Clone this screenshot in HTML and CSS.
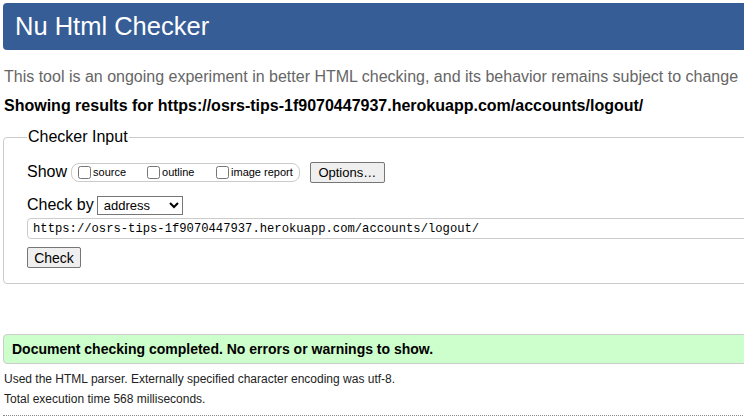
FILE: index.html
```html
<!DOCTYPE html>
<html>
<head>
<meta charset="utf-8">
<title>Nu Html Checker</title>
<link rel="stylesheet" href="styles.css">
</head>
<body>
<div class="page">
  <h1 class="title">Nu Html Checker</h1>
  <p class="intro">This tool is an ongoing experiment in better HTML checking, and its behavior remains subject to change</p>
  <p class="results">Showing results for https://osrs-tips-1f9070447937.herokuapp.com/accounts/logout/</p>
  <fieldset class="checker">
    <legend class="legend">Checker Input</legend>
    <div class="row show-row">
      <span class="label">Show</span>
      <fieldset class="opts">
        <label class="opt"><input type="checkbox" class="cb">source</label>
        <label class="opt"><input type="checkbox" class="cb">outline</label>
        <label class="opt"><input type="checkbox" class="cb">image report</label>
      </fieldset>
      <button class="btn options">Options…</button>
    </div>
    <div class="row by-row">
      <span class="label">Check by</span>
      <select class="sel"><option>address</option></select>
    </div>
    <input class="url" type="text" value="https://osrs-tips-1f9070447937.herokuapp.com/accounts/logout/">
    <div class="row">
      <button class="btn check">Check</button>
    </div>
  </fieldset>
  <p class="success">Document checking completed. No errors or warnings to show.</p>
  <p class="info">Used the HTML parser. Externally specified character encoding was utf-8.</p>
  <p class="info">Total execution time 568 milliseconds.</p>
  <hr class="sep">
</div>
</body>
</html>
```
FILE: styles.css
```css
html, body {
  margin: 0;
  padding: 0;
  overflow: hidden;
  background: #fff;
}
body {
  font-family: "Liberation Sans", Arial, sans-serif;
  color: #000;
}
.page {
  width: 780px;
  padding: 3px 0 0 3px;
}
.title {
  margin: 0;
  height: 47px;
  box-sizing: border-box;
  background: #365d95;
  color: #fff;
  font-weight: normal;
  font-size: 25.5px;
  line-height: 47px;
  padding-left: 12px;
  border-radius: 4px;
}
.intro {
  margin: 17px 0 0 1px;
  font-size: 16px;
  line-height: 20px;
  color: #666;
}
.results {
  margin: 9px 0 0 1px;
  font-size: 16px;
  line-height: 20px;
  font-weight: bold;
}
.checker {
  margin: 12px 0 0 0;
  border: 1px solid #ccc;
  border-radius: 4px;
  padding: 15px 0 15px 23px;
}
.legend {
  font-size: 16px;
  padding: 0 1px;
  margin-left: 0;
}
.row {
  display: flex;
  align-items: center;
}
.label {
  font-size: 16px;
}
.show-row {
  height: 22px;
}
.opts {
  display: flex;
  align-items: center;
  margin: 0 0 0 4px;
  padding: 0 6px 0 6px;
  height: 19px;
  box-sizing: border-box;
  border: 1px solid #ccc;
  border-radius: 8px;
  gap: 0;
}
.opt {
  display: flex;
  align-items: center;
  font-size: 11px;
}
.opt:nth-child(1) { width: 69px; }
.opt:nth-child(2) { width: 69px; }
.cb {
  margin: 0 2px 0 0;
  width: 13px;
  height: 13px;
}
.btn {
  font-family: "Liberation Sans", Arial, sans-serif;
  font-size: 13px;
  background: #efefef;
  border: 1px solid #767676;
  border-radius: 2px;
  padding: 0 6px;
  height: 21px;
  color: #000;
}
.options {
  margin-left: 10px;
  width: 75px;
}
.by-row {
  margin-top: 12px;
  height: 20px;
}
.sel {
  margin-left: 3px;
  width: 86px;
  height: 19px;
  font-family: "Liberation Sans", Arial, sans-serif;
  font-size: 13px;
  border: 1px solid #767676;
  border-radius: 0;
  padding: 0 2px;
  background: #fff;
}
.url {
  display: block;
  margin-top: 3px;
  width: 760px;
  height: 21px;
  box-sizing: border-box;
  border: 1px solid #ccc;
  border-radius: 4px;
  padding: 0 5px;
  font-family: "Liberation Mono", "Courier New", monospace;
  font-size: 12.2px;
  color: #000;
}
.check {
  margin-top: 8px;
  width: 54px;
  padding: 0;
  font-size: 14px;
}
.success {
  margin: 50px 0 0 0;
  height: 30px;
  box-sizing: border-box;
  background: #ccffcc;
  border: 1px solid #ccc;
  border-radius: 4px;
  padding-left: 8px;
  font-weight: bold;
  font-size: 14px;
  line-height: 28px;
}
.info {
  margin: 0 0 0 1px;
  font-size: 12px;
  line-height: 20px;
  color: #222;
}
.success + .info {
  margin-top: 5px;
}
.sep {
  margin: 6px 0 0 0;
  border: 0;
  border-top: 1px dotted #888;
  height: 0;
}
```
